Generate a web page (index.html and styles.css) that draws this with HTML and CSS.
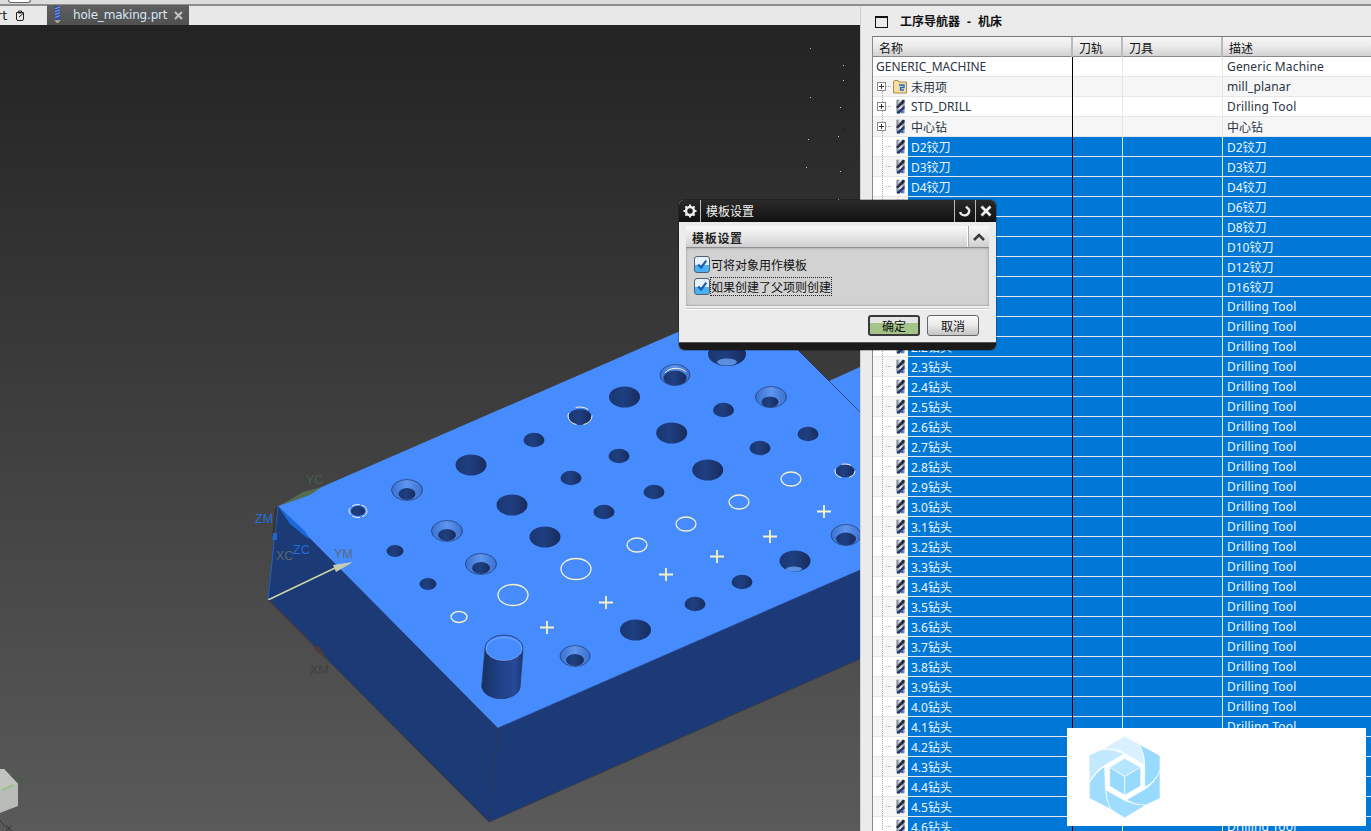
FILE: index.html
```html
<!DOCTYPE html>
<html lang="zh">
<head>
<meta charset="utf-8">
<title>hole_making.prt</title>
<link rel="stylesheet" href="styles.css">
</head>
<body>
<svg class="defs" aria-hidden="true">
  <defs>
    <linearGradient id="steel" x1="0" x2="1" y1="0" y2="0">
      <stop offset="0" stop-color="#707680"/><stop offset=".5" stop-color="#eceef0"/><stop offset="1" stop-color="#7c828c"/>
    </linearGradient>
    <linearGradient id="holeFill" x1="0" x2="1" y1="0" y2="0">
      <stop offset="0" stop-color="#1b3770"/><stop offset=".45" stop-color="#1f3f82"/><stop offset="1" stop-color="#182c5c"/>
    </linearGradient>
    <linearGradient id="csFill" x1="0" x2="1" y1="0" y2="0">
      <stop offset="0" stop-color="#3a70d0"/><stop offset=".5" stop-color="#5f96ee"/><stop offset="1" stop-color="#3a70d0"/>
    </linearGradient>
    <linearGradient id="cylFill" x1="0" x2="1" y1="0" y2="0">
      <stop offset="0" stop-color="#16305f"/><stop offset=".4" stop-color="#1f3f85"/><stop offset=".8" stop-color="#264a9a"/><stop offset="1" stop-color="#1a3672"/>
    </linearGradient>
    <symbol id="drill" viewBox="0 0 9 15">
      <rect x=".5" y=".5" width="8" height="14" rx="1" fill="url(#steel)"/>
      <path d="M8.500 1V3.500L2.500 9H.5V7.500L6.500 1Z" fill="#272e44"/>
      <path d="M8.500 6.500V9.500L3.500 14.500H1V13Z" fill="#20356a"/>
      <circle cx="6" cy="12.800" r="1.300" fill="#2f66c8"/>
    </symbol>
  </defs>
</svg>

<div class="strip"><span class="strip-pill"></span></div>

<div class="work">
  <div class="graphics">
    <div class="tabbar">
      <div class="tab-prev"><span class="tab-prev-text">rt</span>
        <svg class="tab-doc" viewBox="0 0 10 11"><path d="M1.500 2.500H8.500V9Q8.500 10.500 7 10.500H3Q1.500 10.500 1.500 9ZM3.500 1H6.500V3H3.500ZM4 7L8 3.500" fill="none" stroke="#222" stroke-width="1"/></svg>
      </div>
      <div class="tab-active">
        <svg class="tab-drill" viewBox="0 0 9 20"><rect x="2" y="0" width="5" height="15" fill="#2c4fb0"/><path d="M2 3L7 1M2 6L7 4M2 9L7 7M2 12L7 10" stroke="#8fb0e8" stroke-width="1"/><path d="M1 15H8L5 18H4Z" fill="#b8b08a"/></svg>
        <span class="tab-name">hole_making.prt</span>
        <svg class="tab-x" viewBox="0 0 9 9"><path d="M1 1L8 8M8 1L1 8" stroke="#c4c4c4" stroke-width="2"/></svg>
      </div>
    </div>
    <svg class="scene" viewBox="0 25 860 806" role="img" aria-label="hole making part">
      <g fill="#c8c8c8">
        <rect x="810" y="48" width="1" height="1" fill="#b8b890"/><rect x="843" y="65" width="1" height="1"/><rect x="843" y="80" width="1" height="1"/><rect x="810" y="97" width="1" height="1"/><rect x="840" y="107" width="1" height="1"/><rect x="843" y="129" width="1" height="1" fill="#000"/><rect x="838" y="136" width="1" height="1"/><rect x="808" y="139" width="1" height="1"/><rect x="806" y="167" width="1" height="1"/><rect x="840" y="171" width="1" height="1"/><rect x="838" y="199" width="1" height="1"/>
      </g>
      <!-- block -->
      <polygon points="278,506 268,600 489,822 498,728" fill="#1c3a75"/>
      <polygon points="498,728 489,822 860,659 860,570" fill="#1c3a78"/>
      <polygon points="278,506 749,301 829,381 860,367 860,570 498,728" fill="#468cff"/>
      <path d="M829 381L860 412" stroke="#33507f" stroke-width="1"/>
      <path d="M749 301L829 381" stroke="#2a3a58" stroke-width="1"/>
      <path d="M268 600L489 822L860 659" fill="none" stroke="#3a3d42" stroke-width="1"/>
      <path d="M498 728L489 822" stroke="#2c3850" stroke-width="1"/>
      <path d="M498 728L860 570" stroke="#24407f" stroke-width=".6"/>
      <polygon points="278,506 305,531 310,540 290,524" fill="#1a6ad8"/>

      <!-- axes -->
      <polygon points="279,506 303,492 322,487 310,495" fill="#566c52"/>
      <path d="M278 506L268 600" stroke="#1c62c4" stroke-width="1"/>
      <path d="M276 508L273 540" stroke="#3d3030" stroke-width="2.400"/>
      <polygon points="273,533 277,533 277,540 272,540" fill="#2264c8"/>
      <path d="M268 600L335 568" stroke="#cfd8a8" stroke-width="1.400"/>
      <polygon points="333,565 353,562 336,572" fill="#c6ccb0"/>
      <path d="M268 600L328 660" stroke="#4a3e3c" stroke-width="1.200"/>
      <polygon points="314,650 318,645 328,660" fill="#4a3e3c"/>
      <g class="axis-label">
        <text x="306" y="484" fill="#46604a">YC</text>
        <text x="255" y="523" fill="#1f6fdc">ZM</text>
        <text x="276" y="560" fill="#5d6470">XC</text>
        <text x="293" y="554" fill="#1f6fdc">ZC</text>
        <text x="334" y="558" fill="#5d6878">YM</text>
        <text x="310" y="674" fill="#3f3f3f">XM</text>
      </g>

      <!-- plain holes -->
      <g fill="url(#holeFill)">
        <ellipse cx="624.500" cy="397" rx="15.500" ry="10.500"/><ellipse cx="671.700" cy="433" rx="15.500" ry="10.500"/><ellipse cx="707.700" cy="470" rx="15.500" ry="10.500"/><ellipse cx="471" cy="465" rx="15.500" ry="10.500"/><ellipse cx="512" cy="505" rx="15.500" ry="10.500"/><ellipse cx="545" cy="537" rx="15.500" ry="10.500"/><ellipse cx="635.500" cy="630" rx="15.500" ry="10.500"/>
        <ellipse cx="534" cy="440" rx="10.500" ry="7.200"/><ellipse cx="723.500" cy="410" rx="10.500" ry="7.200"/><ellipse cx="808" cy="434" rx="10.500" ry="7.200"/><ellipse cx="760" cy="448" rx="10.500" ry="7.200"/><ellipse cx="619" cy="456" rx="10.500" ry="7.200"/><ellipse cx="571" cy="478" rx="10.500" ry="7.200"/><ellipse cx="654" cy="492" rx="10.500" ry="7.200"/><ellipse cx="604" cy="512" rx="10.500" ry="7.200"/><ellipse cx="742" cy="582" rx="10.500" ry="7.200"/><ellipse cx="695" cy="604" rx="10.500" ry="7.200"/>
        <ellipse cx="428" cy="584" rx="8.500" ry="6"/><ellipse cx="395" cy="551" rx="8.500" ry="6"/>
      </g>
      <!-- countersunk holes -->
      <g class="cs">
        <g><ellipse cx="675" cy="375" rx="15" ry="10.500"/><ellipse class="in" cx="675" cy="378" rx="11.500" ry="7.500"/></g>
        <g><ellipse cx="771" cy="397" rx="15.500" ry="10.500"/><ellipse class="in" cx="770" cy="402" rx="8.500" ry="5.500"/></g>
        <g><ellipse cx="407" cy="490" rx="15.500" ry="10.500"/><ellipse class="in" cx="407" cy="494" rx="8.500" ry="6"/></g>
        <g><ellipse cx="447" cy="531" rx="15.500" ry="10.500"/><ellipse class="in" cx="447" cy="535" rx="9" ry="6"/></g>
        <g><ellipse cx="481" cy="564" rx="15.500" ry="10.500"/><ellipse class="in" cx="481" cy="568" rx="9" ry="6"/></g>
        <g><ellipse cx="846" cy="535" rx="15" ry="10.500"/><ellipse class="in" cx="846" cy="539" rx="10" ry="6.500"/></g>
        <g><ellipse cx="575" cy="656" rx="15" ry="10.500"/><ellipse class="in" cx="575" cy="660" rx="9" ry="6"/></g>
      </g>
      <!-- deep holes -->
      <g>
        <ellipse cx="727" cy="354" rx="19" ry="12" fill="url(#holeFill)"/><ellipse cx="727" cy="362" rx="10" ry="3.500" fill="#5a8ee0"/>
        <ellipse cx="795" cy="561" rx="15.500" ry="10.500" fill="url(#holeFill)"/><ellipse cx="794" cy="569" rx="8" ry="2.500" fill="#5a8ee0"/>
      </g>
      <!-- holes with pale arcs -->
      <g fill="url(#holeFill)">
        <ellipse cx="580" cy="417" rx="11.500" ry="8"/><ellipse cx="845" cy="471" rx="9.500" ry="6.500"/><ellipse cx="358" cy="511" rx="7" ry="5"/>
      </g>
      <g class="pale-thin">
        <ellipse cx="580" cy="416" rx="12" ry="9" stroke-dasharray="13 7 16 9"/>
        <ellipse cx="845" cy="471" rx="10" ry="7" stroke-dasharray="9 8 12 8"/>
        <ellipse cx="358" cy="511" rx="9" ry="6.500" stroke-dasharray="8 2"/>
        <path d="M665 373A12 8 0 0 1 686 372"/>
      </g>
      <!-- circles -->
      <g class="pale">
        <ellipse cx="791" cy="479" rx="10" ry="7"/><ellipse cx="739" cy="502" rx="10" ry="7"/><ellipse cx="686" cy="524" rx="10" ry="7"/><ellipse cx="637" cy="545" rx="10" ry="7"/><ellipse cx="576" cy="569" rx="15" ry="10.500"/><ellipse cx="513" cy="595" rx="15" ry="10.500"/><ellipse cx="459" cy="617" rx="8" ry="5.500"/>
      </g>
      <!-- plus marks -->
      <g class="pale plus">
        <path d="M817 511.500H831M824 505V518"/><path d="M763 536.500H777M770 530V543"/><path d="M710 556.500H724M717 550V563"/><path d="M659 574.500H673M666 568V581"/><path d="M599 602.500H613M606 596V609"/><path d="M540 627.500H554M547 621V634"/>
      </g>
      <!-- boss -->
      <path d="M485 648L482 683A19 13 0 0 0 520 688L523 650Z" fill="url(#cylFill)" stroke="#2a3a60" stroke-width=".7"/>
      <ellipse cx="504" cy="648" rx="19" ry="13" fill="#468cff" stroke="#24345c" stroke-width=".8"/>
      <ellipse cx="504" cy="649" rx="18" ry="11.500" fill="none" stroke="#8fb8f8" stroke-width=".6"/>
      <!-- view triad -->
      <polygon points="0,769 4,769 18,784 18,806 0,813" fill="#b7bcb6"/>
      <polygon points="4,769 18,784 0,790 0,769" fill="#c0c4bf"/>
      <path d="M2 790L14 785" stroke="#9cc088" stroke-width="2"/>
      <path d="M17 776L20 782L23 776M20 782V785" fill="none" stroke="#3c6448" stroke-width="1.200"/>
      <path d="M0 820L4 826M3 825L10 831M6 825L12 831M12 825L6 831" stroke="#403838" stroke-width="1"/>
    </svg>
  </div>

  <div class="panel">
    <div class="panel-title">
      <span class="panel-box"></span>
      <span class="panel-text">工序导航器 - 机床</span>
    </div>
    <div class="table">
      <div class="head">
        <div class="hcell hcell-name">名称</div>
        <div class="hcell hcell-path">刀轨</div>
        <div class="hcell hcell-tool">刀具</div>
        <div class="hcell">描述</div>
      </div>
      <div class="rows">
        <div class="row"><div class="name"><span class="root-label">GENERIC_MACHINE</span></div><div class="c"></div><div class="c"></div><div class="c desc">Generic Machine</div></div>
        <div class="row"><div class="name"><span class="twig"><span class="exp"></span></span><svg class="folder" viewBox="0 0 14 14"><path d="M.5 3V13H13.500V2H6L5 .5H1.500L.5 2Z" fill="#f6dfa0" stroke="#a88a50"/><path d="M6 5H11V7.500H7.500V10H11" fill="none" stroke="#1c6cd0" stroke-width="1.400"/></svg><span class="label">未用项</span></div><div class="c"></div><div class="c"></div><div class="c desc">mill_planar</div></div>
        <div class="row"><div class="name"><span class="twig"><span class="exp"></span></span><svg class="ic"><use href="#drill"/></svg><span class="label latin">STD_DRILL</span></div><div class="c"></div><div class="c"></div><div class="c desc">Drilling Tool</div></div>
        <div class="row"><div class="name"><span class="twig"><span class="exp"></span></span><svg class="ic"><use href="#drill"/></svg><span class="label">中心钻</span></div><div class="c"></div><div class="c"></div><div class="c desc cjk">中心钻</div></div>
        <div class="row sel"><div class="name"><span class="twig"></span><svg class="ic"><use href="#drill"/></svg><span class="label">D2铰刀</span></div><div class="c"></div><div class="c"></div><div class="c desc cjk">D2铰刀</div></div>
        <div class="row sel"><div class="name"><span class="twig"></span><svg class="ic"><use href="#drill"/></svg><span class="label">D3铰刀</span></div><div class="c"></div><div class="c"></div><div class="c desc cjk">D3铰刀</div></div>
        <div class="row sel"><div class="name"><span class="twig"></span><svg class="ic"><use href="#drill"/></svg><span class="label">D4铰刀</span></div><div class="c"></div><div class="c"></div><div class="c desc cjk">D4铰刀</div></div>
        <div class="row sel"><div class="name"><span class="twig"></span><svg class="ic"><use href="#drill"/></svg><span class="label">D6铰刀</span></div><div class="c"></div><div class="c"></div><div class="c desc cjk">D6铰刀</div></div>
        <div class="row sel"><div class="name"><span class="twig"></span><svg class="ic"><use href="#drill"/></svg><span class="label">D8铰刀</span></div><div class="c"></div><div class="c"></div><div class="c desc cjk">D8铰刀</div></div>
        <div class="row sel"><div class="name"><span class="twig"></span><svg class="ic"><use href="#drill"/></svg><span class="label">D10铰刀</span></div><div class="c"></div><div class="c"></div><div class="c desc cjk">D10铰刀</div></div>
        <div class="row sel"><div class="name"><span class="twig"></span><svg class="ic"><use href="#drill"/></svg><span class="label">D12铰刀</span></div><div class="c"></div><div class="c"></div><div class="c desc cjk">D12铰刀</div></div>
        <div class="row sel"><div class="name"><span class="twig"></span><svg class="ic"><use href="#drill"/></svg><span class="label">D16铰刀</span></div><div class="c"></div><div class="c"></div><div class="c desc cjk">D16铰刀</div></div>
        <div class="row sel"><div class="name"><span class="twig"></span><svg class="ic"><use href="#drill"/></svg><span class="label">2.0钻头</span></div><div class="c"></div><div class="c"></div><div class="c desc">Drilling Tool</div></div>
        <div class="row sel"><div class="name"><span class="twig"></span><svg class="ic"><use href="#drill"/></svg><span class="label">2.1钻头</span></div><div class="c"></div><div class="c"></div><div class="c desc">Drilling Tool</div></div>
        <div class="row sel"><div class="name"><span class="twig"></span><svg class="ic"><use href="#drill"/></svg><span class="label">2.2钻头</span></div><div class="c"></div><div class="c"></div><div class="c desc">Drilling Tool</div></div>
        <div class="row sel"><div class="name"><span class="twig"></span><svg class="ic"><use href="#drill"/></svg><span class="label">2.3钻头</span></div><div class="c"></div><div class="c"></div><div class="c desc">Drilling Tool</div></div>
        <div class="row sel"><div class="name"><span class="twig"></span><svg class="ic"><use href="#drill"/></svg><span class="label">2.4钻头</span></div><div class="c"></div><div class="c"></div><div class="c desc">Drilling Tool</div></div>
        <div class="row sel"><div class="name"><span class="twig"></span><svg class="ic"><use href="#drill"/></svg><span class="label">2.5钻头</span></div><div class="c"></div><div class="c"></div><div class="c desc">Drilling Tool</div></div>
        <div class="row sel"><div class="name"><span class="twig"></span><svg class="ic"><use href="#drill"/></svg><span class="label">2.6钻头</span></div><div class="c"></div><div class="c"></div><div class="c desc">Drilling Tool</div></div>
        <div class="row sel"><div class="name"><span class="twig"></span><svg class="ic"><use href="#drill"/></svg><span class="label">2.7钻头</span></div><div class="c"></div><div class="c"></div><div class="c desc">Drilling Tool</div></div>
        <div class="row sel"><div class="name"><span class="twig"></span><svg class="ic"><use href="#drill"/></svg><span class="label">2.8钻头</span></div><div class="c"></div><div class="c"></div><div class="c desc">Drilling Tool</div></div>
        <div class="row sel"><div class="name"><span class="twig"></span><svg class="ic"><use href="#drill"/></svg><span class="label">2.9钻头</span></div><div class="c"></div><div class="c"></div><div class="c desc">Drilling Tool</div></div>
        <div class="row sel"><div class="name"><span class="twig"></span><svg class="ic"><use href="#drill"/></svg><span class="label">3.0钻头</span></div><div class="c"></div><div class="c"></div><div class="c desc">Drilling Tool</div></div>
        <div class="row sel"><div class="name"><span class="twig"></span><svg class="ic"><use href="#drill"/></svg><span class="label">3.1钻头</span></div><div class="c"></div><div class="c"></div><div class="c desc">Drilling Tool</div></div>
        <div class="row sel"><div class="name"><span class="twig"></span><svg class="ic"><use href="#drill"/></svg><span class="label">3.2钻头</span></div><div class="c"></div><div class="c"></div><div class="c desc">Drilling Tool</div></div>
        <div class="row sel"><div class="name"><span class="twig"></span><svg class="ic"><use href="#drill"/></svg><span class="label">3.3钻头</span></div><div class="c"></div><div class="c"></div><div class="c desc">Drilling Tool</div></div>
        <div class="row sel"><div class="name"><span class="twig"></span><svg class="ic"><use href="#drill"/></svg><span class="label">3.4钻头</span></div><div class="c"></div><div class="c"></div><div class="c desc">Drilling Tool</div></div>
        <div class="row sel"><div class="name"><span class="twig"></span><svg class="ic"><use href="#drill"/></svg><span class="label">3.5钻头</span></div><div class="c"></div><div class="c"></div><div class="c desc">Drilling Tool</div></div>
        <div class="row sel"><div class="name"><span class="twig"></span><svg class="ic"><use href="#drill"/></svg><span class="label">3.6钻头</span></div><div class="c"></div><div class="c"></div><div class="c desc">Drilling Tool</div></div>
        <div class="row sel"><div class="name"><span class="twig"></span><svg class="ic"><use href="#drill"/></svg><span class="label">3.7钻头</span></div><div class="c"></div><div class="c"></div><div class="c desc">Drilling Tool</div></div>
        <div class="row sel"><div class="name"><span class="twig"></span><svg class="ic"><use href="#drill"/></svg><span class="label">3.8钻头</span></div><div class="c"></div><div class="c"></div><div class="c desc">Drilling Tool</div></div>
        <div class="row sel"><div class="name"><span class="twig"></span><svg class="ic"><use href="#drill"/></svg><span class="label">3.9钻头</span></div><div class="c"></div><div class="c"></div><div class="c desc">Drilling Tool</div></div>
        <div class="row sel"><div class="name"><span class="twig"></span><svg class="ic"><use href="#drill"/></svg><span class="label">4.0钻头</span></div><div class="c"></div><div class="c"></div><div class="c desc">Drilling Tool</div></div>
        <div class="row sel"><div class="name"><span class="twig"></span><svg class="ic"><use href="#drill"/></svg><span class="label">4.1钻头</span></div><div class="c"></div><div class="c"></div><div class="c desc">Drilling Tool</div></div>
        <div class="row sel"><div class="name"><span class="twig"></span><svg class="ic"><use href="#drill"/></svg><span class="label">4.2钻头</span></div><div class="c"></div><div class="c"></div><div class="c desc">Drilling Tool</div></div>
        <div class="row sel"><div class="name"><span class="twig"></span><svg class="ic"><use href="#drill"/></svg><span class="label">4.3钻头</span></div><div class="c"></div><div class="c"></div><div class="c desc">Drilling Tool</div></div>
        <div class="row sel"><div class="name"><span class="twig"></span><svg class="ic"><use href="#drill"/></svg><span class="label">4.4钻头</span></div><div class="c"></div><div class="c"></div><div class="c desc">Drilling Tool</div></div>
        <div class="row sel"><div class="name"><span class="twig"></span><svg class="ic"><use href="#drill"/></svg><span class="label">4.5钻头</span></div><div class="c"></div><div class="c"></div><div class="c desc">Drilling Tool</div></div>
        <div class="row sel"><div class="name"><span class="twig"></span><svg class="ic"><use href="#drill"/></svg><span class="label">4.6钻头</span></div><div class="c"></div><div class="c"></div><div class="c desc">Drilling Tool</div></div>
      </div>
    </div>
  </div>
</div>

<div class="dialog">
  <div class="dlg-title">
    <span class="dlg-gear"><svg viewBox="0 0 14 14"><circle cx="7" cy="7" r="4" fill="none" stroke="#eee" stroke-width="2.600"/><path d="M7 .5V3M7 11V13.500M.5 7H3M11 7H13.500M2.400 2.400L4 4M10 10L11.600 11.600M2.400 11.600L4 10M10 4L11.600 2.400" stroke="#eee" stroke-width="2"/></svg></span>
    <span class="dlg-name">模板设置</span>
    <span class="dlg-btn"><svg viewBox="0 0 12 12"><path d="M5 1.500L9 3A4 4 0 1 1 2 9" fill="none" stroke="#e8e8e8" stroke-width="2.400" transform="rotate(25 6 6)"/></svg></span>
    <span class="dlg-btn"><svg viewBox="0 0 12 12"><path d="M1.500 1.500L10.500 10.500M10.500 1.500L1.500 10.500" stroke="#f0f0f0" stroke-width="2.800"/></svg></span>
  </div>
  <div class="dlg-body">
    <div class="sec-head"><span class="sec-title">模板设置</span><span class="sec-toggle"><svg viewBox="0 0 12 8"><path d="M1 7L6 2L11 7" fill="none" stroke="#3c3c3c" stroke-width="2.600"/></svg></span></div>
    <div class="sec-body">
      <div class="check-row"><span class="check"><svg viewBox="0 0 14 14"><path d="M2.500 7L6 10.500L12 2.500" fill="none" stroke="#1d5fae" stroke-width="2.600"/></svg></span><span class="check-text">可将对象用作模板</span></div>
      <div class="check-row"><span class="check"><svg viewBox="0 0 14 14"><path d="M2.500 7L6 10.500L12 2.500" fill="none" stroke="#1d5fae" stroke-width="2.600"/></svg></span><span class="check-text focus">如果创建了父项则创建</span></div>
    </div>
    <div class="dlg-sep"></div>
    <div class="dlg-actions">
      <span class="btn btn-ok">确定</span>
      <span class="btn">取消</span>
    </div>
  </div>
  <div class="dlg-foot"></div>
</div>

<div class="watermark">
  <svg class="logo" viewBox="85 48 213 246" aria-label="logo">
    <g stroke="#fff" stroke-width="2">
      <path d="M125 88L192 48L235 72Q252 100 250 135L192 100Q160 82 125 88Z" fill="#d9f1ff"/>
      <path d="M85 105L125 88Q160 86 190 102L132 136Q100 155 86 190Z" fill="#c2e9ff"/>
      <path d="M86 190Q105 155 132 140L134 205Q136 240 150 268L86 235Z" fill="#9fdcfd"/>
      <path d="M136 210L195 243Q225 255 256 255L192 294L150 268Q136 240 136 210Z" fill="#9fdcfd"/>
      <path d="M197 240L252 208Q285 188 298 150V235L256 255Q225 256 197 240Z" fill="#97dafd"/>
      <path d="M235 72L298 107V150Q285 185 252 202V135Q252 100 235 72Z" fill="#97dafd"/>
      <path d="M192 115L240 142L192 170L147 142Z" fill="#b6e6ff"/>
      <path d="M147 142L192 170V226L147 198Z" fill="#97dafd"/>
      <path d="M240 142V198L192 226V170Z" fill="#97dafd"/>
    </g>
  </svg>
</div>
</body>
</html>
```
FILE: styles.css
```css
* { box-sizing: border-box; }
html, body { margin: 0; height: 100%; }
body {
  display: flex;
  flex-direction: column;
  height: 831px;
  overflow: hidden;
  font: 12px/20px "Noto Sans", "Noto Sans CJK SC", sans-serif;
  color: #222;
  background: #e8e8e8;
  position: relative;
}
.defs { position: absolute; width: 0; height: 0; }

/* top strip */
.strip {
  flex: none;
  height: 6px;
  background: #dcdcdc;
  border-bottom: 2px solid #8e8e8e;
  padding-left: 8px;
}
.strip-pill {
  display: block;
  width: 23px;
  height: 3px;
  background: #fff;
  border: 1px solid #666;
  border-top: 0;
  border-radius: 0 0 3px 3px;
}

.work { flex: 1; display: flex; min-height: 0; }
.graphics { flex: none; width: 860px; display: flex; flex-direction: column; }

/* tabs */
.tabbar { flex: none; height: 19px; display: flex; background: #e8e8e8; }
.tab-prev { width: 47px; display: flex; align-items: center; justify-content: space-between; padding-right: 22px; margin-top: -1px; }
.tab-prev-text { margin-left: -3px; font: 13px/19px "DejaVu Sans", sans-serif; color: #222; }
.tab-doc { width: 10px; height: 11px; }
.tab-active {
  width: 142px;
  display: flex;
  align-items: center;
  margin-top: -1px;
  padding-left: 6px;
  background: linear-gradient(#5f5f5f, #505050);
  color: #d6e6f6;
  height: 20px;
}
.tab-drill { width: 9px; height: 19px; flex: none; }
.tab-name { margin-left: 11px; font: 12px/22px "DejaVu Sans", sans-serif; letter-spacing: -.2px; white-space: nowrap; }
.tab-x { width: 9px; height: 9px; margin-left: 7px; flex: none; }

/* 3D scene */
.scene {
  flex: 1;
  display: block;
  width: 860px;
  min-height: 0;
  background: linear-gradient(#232323, #5a5a5a);
}
.axis-label text { font: 12.500px "Liberation Sans", sans-serif; }
.cs > g > ellipse { fill: url(#csFill); stroke: #1b2c58; stroke-width: .6; }
.cs > g > ellipse.in { fill: url(#holeFill); stroke: none; }
.pale { fill: none; stroke: #f6f2c4; stroke-width: 1.300; }
.plus { stroke-width: 1.800; }
.pale-thin { fill: none; stroke: #f3efc8; stroke-width: 1; }

/* right panel */
.panel {
  flex: 1;
  min-width: 0;
  display: flex;
  flex-direction: column;
  background: #ebebeb;
  border-left: 1px solid #cfcfcf;
  padding-left: 11px;
}
.panel-title { flex: none; height: 30px; display: flex; align-items: center; padding: 1px 0 0 3px; }
.panel-box { width: 13px; height: 12px; border: 1px solid #111; border-top-width: 2px; }
.panel-text { margin-left: 12px; font-weight: 700; color: #111; word-spacing: 4px; }
.table {
  flex: 1;
  min-height: 0;
  overflow: hidden;
  border-top: 1px solid #777;
  border-left: 1px solid #8a8a8a;
  background: #fff;
}
.head {
  display: grid;
  grid-template-columns: 200px 50px 100px 1fr;
  height: 20px;
  border-bottom: 1px solid #8a8a8a;
  background: linear-gradient(#f6f6f6, #ececec 45%, #d2d2d2);
}
.hcell { padding-left: 6px; line-height: 23px; color: #111; }
.hcell-name, .hcell-path, .hcell-tool { border-right: 2px solid #bbb; }

.rows { position: relative; }
.rows::after {
  content: "";
  position: absolute;
  left: 199px;
  top: 0;
  bottom: 0;
  width: 1px;
  background: #000;
}
.row {
  display: grid;
  grid-template-columns: 200px 50px 100px 1fr;
  height: 20px;
  border-bottom: 1px solid #e6e6e6;
  background: #fff;
}
.row:nth-child(even) { background: #f6f6f6; }
.name { display: flex; align-items: stretch; min-width: 0; }
.c { border-right: 1px solid #e6e6e6; }
.c:last-child { border-right: 0; }
.desc { padding-left: 4px; line-height: 19px; letter-spacing: .15px; color: #2a3442; white-space: nowrap; }
.desc.cjk { line-height: 21px; letter-spacing: 0; }
.root-label { padding-left: 3px; line-height: 19px; color: #2a3442; }
.twig {
  flex: none;
  width: 20px;
  height: 20px;
  display: flex;
  align-items: center;
  background:
    repeating-linear-gradient(#a8a8a8 0 1px, transparent 1px 2px) 9px 0 / 1px 20px no-repeat,
    repeating-linear-gradient(90deg, #a8a8a8 0 1px, transparent 1px 2px) 13px 9px / 6px 1px no-repeat;
}
.row:nth-child(2) .twig { background:
    repeating-linear-gradient(#a8a8a8 0 1px, transparent 1px 2px) 9px 14px / 1px 6px no-repeat,
    repeating-linear-gradient(90deg, #a8a8a8 0 1px, transparent 1px 2px) 13px 9px / 6px 1px no-repeat; }
.exp {
  width: 9px;
  height: 9px;
  margin: -1px 0 0 4px;
  border: 1px solid #8a8a8a;
  background:
    linear-gradient(#333, #333) center / 5px 1px no-repeat,
    linear-gradient(#333, #333) center / 1px 5px no-repeat,
    #fff;
}
.ic { flex: none; width: 9px; height: 15px; margin: 2px 3px 0 3px; }
.folder { flex: none; width: 14px; height: 14px; margin: 3px 1px 0 0; }
.label { flex: 1; padding-left: 3px; line-height: 21px; color: #2a3442; white-space: nowrap; }
.label.latin { line-height: 19px; }
.sel .label { background: #0078d7; color: #eef6ff; height: 19px; }
.sel .c { background: #0078d7; border-right-color: #dbe6f0; color: #eef6ff; height: 19px; }

/* dialog */
.dialog {
  position: absolute;
  left: 679px;
  top: 200px;
  width: 317px;
  height: 150px;
  display: flex;
  flex-direction: column;
  border-radius: 5px;
  overflow: hidden;
  background: #ececec;
  box-shadow: 0 0 0 1px rgba(0, 0, 0, .25);
}
.dlg-title {
  flex: none;
  height: 22px;
  display: flex;
  align-items: stretch;
  background: linear-gradient(#2a2a2a, #111);
  color: #f0f0f0;
}
.dlg-gear { width: 22px; display: flex; align-items: center; justify-content: center; border-right: 1px solid #bbb; }
.dlg-gear svg { width: 14px; height: 14px; }
.dlg-name { flex: 1; padding-left: 5px; line-height: 24px; }
.dlg-btn { width: 21px; display: flex; align-items: center; justify-content: center; border-left: 1px solid #bbb; }
.dlg-btn svg { width: 12px; height: 12px; }
.dlg-body { flex: 1; min-height: 0; padding: 4px 7px 0 7px; display: flex; flex-direction: column; }
.sec-head {
  flex: none;
  height: 22px;
  display: flex;
  background: linear-gradient(#fafafa, #e6e6e6 50%, #cfcfcf);
  border-bottom: 1px solid #8e8e8e;
}
.sec-title { flex: 1; padding-left: 6px; font-weight: 700; line-height: 25px; letter-spacing: .7px; color: #222; }
.sec-toggle { width: 22px; display: flex; align-items: center; justify-content: center; border-left: 1px solid #fff; box-shadow: inset 1px 0 0 #aaa; }
.sec-toggle svg { width: 12px; height: 8px; }
.sec-body {
  flex: none;
  height: 58px;
  padding: 8px 0 0 8px;
  background: #d2d2d2;
  box-shadow: inset 0 0 3px #8f8f8f;
  display: flex;
  flex-direction: column;
  gap: 5px;
}
.check-row { display: flex; align-items: center; height: 17px; }
.check {
  flex: none;
  width: 16px;
  height: 17px;
  padding: 1px;
  border: 1px solid #50606e;
  border-radius: 3px;
  background: linear-gradient(#e6f2fc 0 55%, #4ab0f4 55% 100%);
}
.check svg { display: block; width: 12px; height: 13px; }
.check-text { margin-left: 1px; line-height: 19px; height: 17px; color: #111; white-space: nowrap; }
.focus { outline: 1px dotted #222; outline-offset: 0; }
.dlg-sep { flex: none; height: 1px; margin-top: 3px; background: #fff; box-shadow: 0 -1px 0 #c8c8c8; }
.dlg-actions { flex: none; display: flex; justify-content: flex-end; gap: 7px; padding: 5px 10px 0 0; }
.btn {
  width: 52px;
  height: 21px;
  text-align: center;
  line-height: 21px;
  color: #111;
  border: 1px solid #666;
  border-radius: 3px;
  background: linear-gradient(#fbfbfb, #e8e8e8 50%, #c4c4c4);
}
.btn-ok {
  border: 2px solid #3a3a3a;
  border-radius: 3px;
  line-height: 19px;
  background: linear-gradient(#e4e4e4 0 35%, #a4c48a 35% 100%);
}
.dlg-foot { flex: none; height: 8px; background: #1a1a1a; border-top: 1px solid #555; }

/* watermark */
.watermark {
  position: absolute;
  left: 1067px;
  top: 728px;
  width: 299px;
  height: 98px;
  background: #fff;
  padding: 8px 0 0 22px;
}
.logo { display: block; width: 71px; height: 82px; }
```
